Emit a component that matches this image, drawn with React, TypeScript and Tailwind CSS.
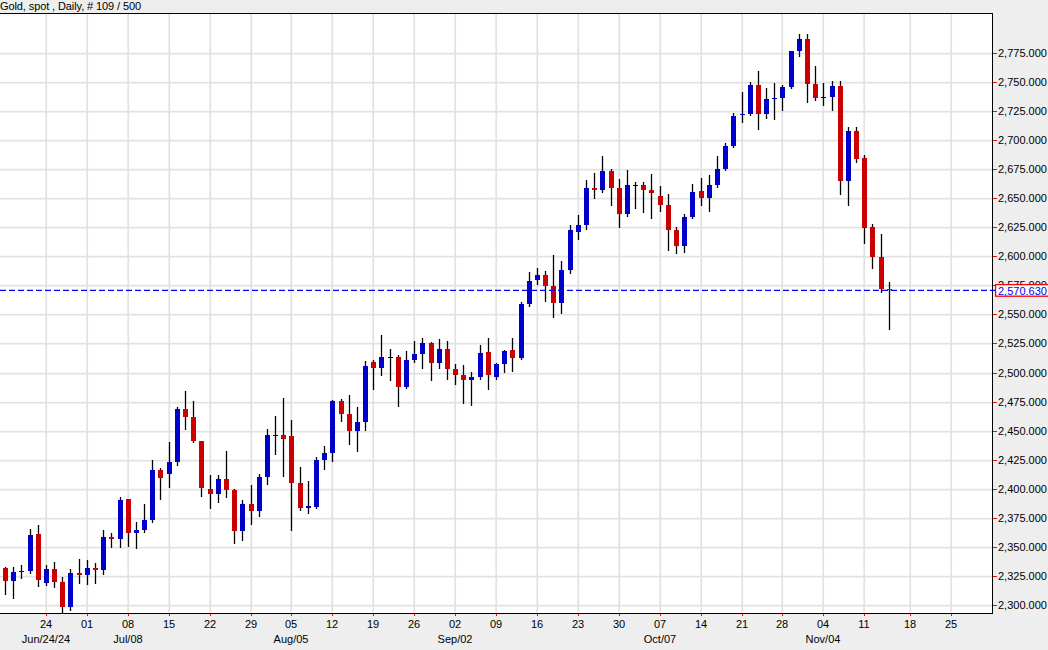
type Candle = [number, "b" | "r" | "k", number, number, number, number];

// x column, colour, wick top, wick bottom, body top, body bottom (pixels)
const candles: Candle[] = [
  [5, "r", 567, 595, 568, 581], [13, "b", 567, 599, 572, 581], [21, "b", 565, 579, 571, 572],
  [30, "b", 529, 574, 535, 571], [38, "r", 525, 587, 534, 580], [46, "b", 565, 586, 569, 583],
  [54, "r", 562, 588, 569, 582], [62, "r", 577, 613, 582, 607], [70, "b", 569, 611, 573, 607],
  [79, "r", 559, 584, 573, 575], [87, "b", 560, 585, 568, 575], [95, "r", 563, 584, 568, 570],
  [103, "b", 530, 575, 537, 570], [111, "r", 533, 548, 537, 539], [120, "b", 497, 548, 500, 539],
  [128, "r", 499, 547, 499, 533], [136, "b", 522, 549, 530, 533], [144, "b", 504, 533, 520, 530],
  [152, "b", 460, 523, 470, 520], [160, "r", 468, 500, 470, 478], [169, "b", 442, 488, 462, 474],
  [177, "b", 407, 466, 409, 462], [185, "r", 391, 430, 409, 417], [193, "r", 401, 443, 417, 441],
  [201, "r", 441, 497, 441, 488], [210, "r", 475, 509, 489, 494], [218, "b", 475, 503, 479, 494],
  [226, "r", 451, 498, 479, 490], [234, "r", 489, 544, 490, 531], [242, "b", 500, 541, 504, 531],
  [251, "r", 485, 525, 504, 511], [259, "b", 474, 517, 477, 511], [267, "b", 429, 485, 435, 477],
  [275, "k", 416, 455, 435, 436], [283, "r", 398, 477, 435, 439], [291, "r", 420, 531, 436, 483],
  [300, "r", 467, 511, 483, 508], [308, "b", 481, 514, 506, 508], [316, "b", 457, 509, 460, 507],
  [324, "b", 446, 470, 453, 460], [332, "b", 400, 462, 401, 453], [341, "r", 399, 422, 401, 414],
  [349, "r", 395, 445, 414, 431], [357, "b", 407, 452, 422, 431], [365, "b", 361, 431, 366, 422],
  [373, "r", 360, 390, 362, 368], [381, "b", 335, 376, 357, 368], [390, "k", 349, 381, 357, 358],
  [398, "r", 355, 407, 357, 387], [406, "b", 351, 389, 360, 387], [414, "b", 341, 363, 354, 360],
  [422, "b", 338, 369, 343, 354], [431, "r", 342, 381, 343, 363], [439, "b", 339, 369, 349, 363],
  [447, "r", 341, 380, 349, 369], [455, "r", 364, 385, 369, 375], [463, "r", 365, 404, 375, 380],
  [471, "b", 372, 406, 377, 380], [480, "b", 345, 380, 353, 377], [488, "r", 338, 390, 352, 375],
  [496, "b", 363, 380, 364, 377], [504, "b", 350, 373, 351, 364], [512, "r", 338, 372, 350, 358],
  [521, "b", 302, 360, 304, 358], [529, "b", 272, 307, 281, 304], [537, "b", 268, 285, 275, 280],
  [545, "r", 271, 302, 275, 286], [553, "r", 255, 318, 286, 303], [561, "b", 261, 314, 270, 303],
  [570, "b", 225, 274, 230, 270], [578, "b", 215, 240, 225, 232], [586, "b", 180, 230, 188, 225],
  [594, "r", 173, 199, 188, 190], [602, "b", 156, 193, 171, 190], [611, "r", 169, 206, 171, 188],
  [619, "r", 179, 228, 188, 214], [627, "b", 170, 217, 185, 214], [635, "k", 182, 209, 185, 186],
  [643, "r", 182, 213, 185, 190], [651, "r", 174, 219, 190, 193], [660, "r", 186, 212, 196, 205],
  [668, "r", 194, 251, 205, 230], [676, "r", 227, 254, 230, 246], [684, "b", 214, 253, 217, 246],
  [692, "b", 184, 219, 192, 217], [701, "r", 178, 206, 191, 198], [709, "b", 175, 212, 185, 198],
  [717, "b", 156, 188, 169, 185], [725, "b", 143, 171, 146, 169], [733, "b", 113, 148, 116, 146],
  [742, "b", 92, 123, 114, 115], [750, "b", 82, 116, 85, 114], [758, "r", 71, 130, 85, 114],
  [766, "b", 88, 119, 99, 114], [774, "b", 83, 120, 98, 99], [782, "b", 85, 111, 87, 98],
  [791, "b", 51, 89, 51, 87], [799, "b", 34, 57, 39, 51], [807, "r", 34, 103, 39, 84],
  [815, "r", 66, 101, 84, 98], [823, "k", 83, 106, 97, 98], [832, "b", 81, 111, 86, 97],
  [840, "r", 81, 195, 86, 181], [848, "b", 127, 206, 131, 181], [856, "r", 127, 163, 131, 159],
  [864, "r", 155, 244, 158, 228], [872, "r", 224, 269, 227, 257], [881, "r", 234, 293, 257, 289],
  [889, "r", 282, 330, 289, 290],
];

const fills = { b: "#0000cc", r: "#cc0000", k: "#000000" };

const weeks: [number, string][] = [
  [46, "24"], [87, "01"], [128, "08"], [169, "15"], [210, "22"], [251, "29"], [291, "05"], [332, "12"],
  [373, "19"], [414, "26"], [455, "02"], [496, "09"], [537, "16"], [578, "23"], [619, "30"], [660, "07"],
  [701, "14"], [742, "21"], [782, "28"], [823, "04"], [864, "11"], [910, "18"], [951, "25"],
];

const months: [number, string][] = [
  [46, "Jun/24/24"], [128, "Jul/08"], [291, "Aug/05"], [455, "Sep/02"], [660, "Oct/07"], [823, "Nov/04"],
];

const prices = Array.from({ length: 20 }, (_, i) => 2300 + i * 25);
const yOf = (p: number) => Math.round(605 - (p - 2300) * 1.1625);
const fmt = (p: number) => `${Math.floor(p / 1000)},${String(p % 1000).padStart(3, "0")}.000`;

export default function App() {
  return (
    <div className="flex h-[650px] w-[1048px] flex-col overflow-hidden bg-[#eeeeee] font-['Liberation_Sans',Arial,sans-serif] text-[11px] tracking-[-0.1px] text-black">
      <div className="h-[13px] shrink-0 leading-[12px]">Gold, spot , Daily, # 109 / 500</div>
      <svg width="1048" height="637" viewBox="0 13 1048 637" className="block shrink-0" fontSize="11">
        <rect x="0" y="13" width="993" height="601" fill="#ffffff" />
        <g fill="#e2e2e2">
          {prices.map((p) => (
            <rect key={p} x="0" y={yOf(p) - 0.2} width="992" height="1.7" />
          ))}
          {weeks.map(([x]) => (
            <rect key={x} x={x - 0.6} y="14" width="1.7" height="599" />
          ))}
        </g>
        {candles.map(([x, c, hi, lo, top, bot]) => (
          <g key={x}>
            <rect x={x - 0.15} y={hi} width="1.3" height={lo - hi} fill="#000000" />
            <rect x={x - 2} y={top} width="5" height={Math.max(bot - top, 1)} fill={fills[c]} shapeRendering="crispEdges" />
          </g>
        ))}
        <g shapeRendering="crispEdges">
          <rect x="0" y="13" width="993" height="1" fill="#000000" />
          <rect x="0" y="613" width="993" height="1" fill="#000000" />
          <rect x="992" y="13" width="1" height="601" fill="#000000" />
          {prices.map((p) => (
            <rect key={p} x="993" y={yOf(p)} width="4" height="1" fill="#ff0000" />
          ))}
          {weeks.map(([x]) => (
            <rect key={x} x={x} y="614" width="1" height="2" fill="#ff0000" />
          ))}
        </g>
        <line x1="0" y1="290.4" x2="995" y2="290.4" stroke="#0000ff" strokeWidth="1.3" strokeDasharray="6 3" />
        {prices.map((p) => (
          <text key={p} x="998" y={yOf(p) + 4} fill="#000000" letterSpacing="0">
            {fmt(p)}
          </text>
        ))}
        {weeks.map(([x, t]) => (
          <text key={x} x={x} y="628" textAnchor="middle" fill="#000000" letterSpacing="0">
            {t}
          </text>
        ))}
        {months.map(([x, t]) => (
          <text key={x} x={x} y="643" textAnchor="middle" fill="#000000" letterSpacing="0">
            {t}
          </text>
        ))}
        <rect x="995.6" y="284.6" width="53" height="11.6" fill="#ffffff" stroke="#ff0000" strokeWidth="1.3" />
        <text x="998" y="295" fill="#0000ff" letterSpacing="0">
          2,570.630
        </text>
      </svg>
    </div>
  );
}
